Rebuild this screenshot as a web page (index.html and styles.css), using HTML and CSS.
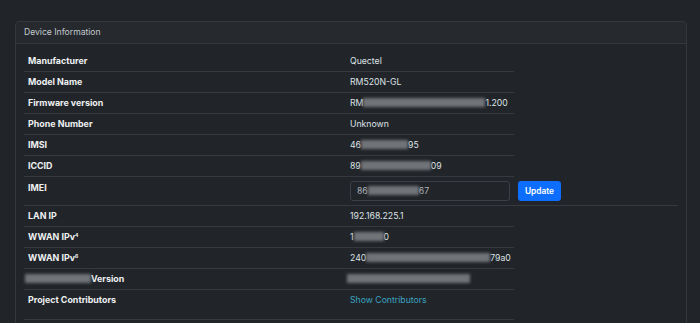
FILE: index.html
```html
<!DOCTYPE html>
<html lang="en">
<head>
    <meta charset="UTF-8">
    <meta name="viewport" content="width=device-width, initial-scale=1.0">
    <title>Device Information</title>
    <link rel="stylesheet" href="styles.css">
</head>
<body>
    <div class="page">
        <div class="card">
            <div class="card-header">Device Information</div>
            <div class="card-body">
                <table class="info-table">
                    <colgroup>
                        <col class="col-label">
                        <col class="col-value">
                        <col class="col-action">
                    </colgroup>
                    <tbody>
                        <tr><th>Manufacturer</th><td>Quectel</td></tr>
                        <tr><th>Model Name</th><td>RM520N-GL</td></tr>
                        <tr><th>Firmware version</th><td>RM<span class="redact w-122"></span>1.200</td></tr>
                        <tr><th>Phone Number</th><td>Unknown</td></tr>
                        <tr><th>IMSI</th><td>46<span class="redact w-47"></span>95</td></tr>
                        <tr><th>ICCID</th><td>89<span class="redact w-70"></span>09</td></tr>
                        <tr class="imei-row">
                            <th>IMEI</th>
                            <td><div class="imei-input">86<span class="redact w-51"></span>67</div></td>
                            <td><button class="btn-update">Update</button></td>
                        </tr>
                        <tr><th>LAN IP</th><td>192.168.225.1</td></tr>
                        <tr><th>WWAN IPv<sup>4</sup></th><td>1<span class="redact w-30"></span>0</td></tr>
                        <tr><th>WWAN IPv<sup>6</sup></th><td>240<span class="redact w-124"></span>79a0</td></tr>
                        <tr><th><span class="redact w-66 lead"></span>Version</th><td><span class="redact w-123 lead"></span></td></tr>
                        <tr class="last-row"><th>Project Contributors</th><td><a href="#" class="link">Show Contributors</a></td></tr>
                    </tbody>
                </table>
            </div>
        </div>
    </div>
</body>
</html>
```

FILE: styles.css
```css
body {
    margin: 0;
    background-color: #212529;
    color: #dee2e6;
    font-family: Inter, "Liberation Sans", sans-serif;
}

.page {
    padding: 21px 13px 0 15px;
}

.card {
    border: 1px solid #34383d;
    border-radius: 4px;
    background-color: #212529;
}

.card-header {
    height: 21px;
    line-height: 21px;
    padding: 0 8px;
    font-size: 8.6px;
    color: #c5c9ce;
    background-color: #262a2e;
    border-bottom: 1px solid #34383d;
    border-radius: 4px 4px 0 0;
}

.card-body {
    padding: 7px 8px 5px 8px;
}

.info-table {
    width: 100%;
    table-layout: fixed;
    border-collapse: collapse;
    font-size: 8.7px;
}

.col-label { width: 322px; }
.col-value { width: 168px; }

.info-table th,
.info-table td {
    padding: 4px 4px;
    line-height: 12px;
    text-align: left;
    vertical-align: top;
    border-bottom: 1px solid #363a3f;
    white-space: nowrap;
}

.info-table th {
    font-weight: 700;
    font-size: 8.9px;
    color: #eef0f2;
}

.info-table sup {
    font-size: 5px;
    vertical-align: 3px;
    line-height: 0;
}

.imei-row th {
    padding-top: 5px;
    padding-bottom: 11px;
}

.imei-row td {
    padding-top: 4px;
    padding-bottom: 3px;
}

.imei-input {
    box-sizing: border-box;
    width: 160px;
    height: 20px;
    line-height: 18px;
    padding: 0 6px;
    border: 1px solid #3c4046;
    border-radius: 3px;
    color: #aeb3b8;
}

.btn-update {
    height: 20px;
    padding: 0 7px;
    border: none;
    border-radius: 3px;
    background-color: #0d6efd;
    color: #fff;
    font-family: inherit;
    font-size: 8.3px;
    font-weight: 600;
}

.last-row th,
.last-row td {
    padding-bottom: 13px;
}

.link {
    color: #3aa3c2;
    text-decoration: none;
}

.redact {
    display: inline-block;
    height: 9px;
    vertical-align: -1px;
    background-color: #707378;
    filter: blur(1.4px);
}

.redact.lead {
    margin-left: -3px;
}

.w-30 { width: 30px; }
.w-47 { width: 47px; }
.w-51 { width: 51px; }
.w-66 { width: 66px; }
.w-70 { width: 70px; }
.w-122 { width: 122px; }
.w-123 { width: 123px; }
.w-124 { width: 124px; }
```
